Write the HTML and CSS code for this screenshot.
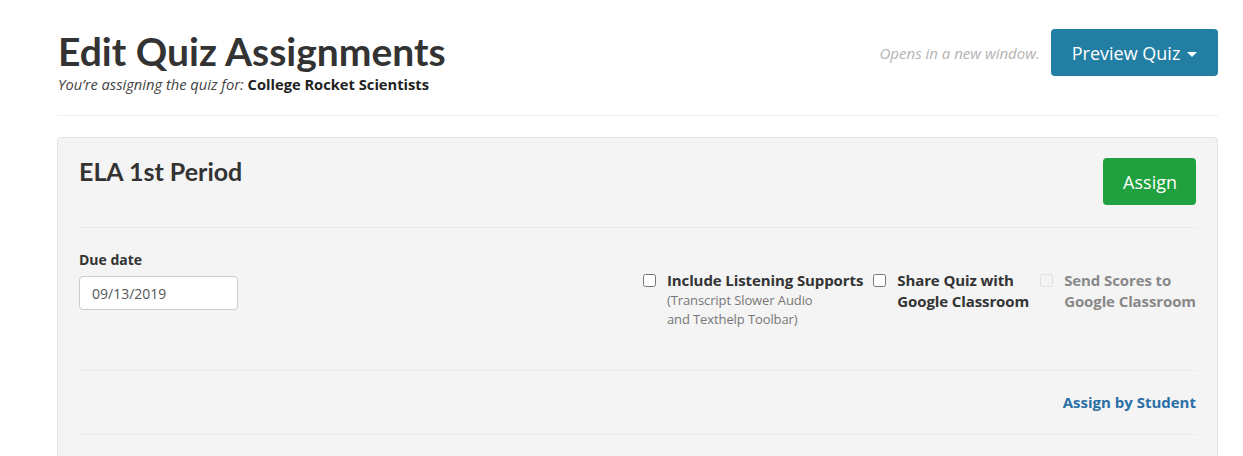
FILE: index.html
```html
<!DOCTYPE html>
<html lang="en">

<head>
    <meta charset="UTF-8">
    <meta name="viewport" content="width=device-width, initial-scale=1.0">
    <title>Edit Quiz Assignments</title>
    <link rel="stylesheet" href="styles.css">
</head>

<body>
    <div class="page">
        <div class="page-header">
            <div class="title-block">
                <h1>Edit Quiz Assignments</h1>
                <p class="subtitle"><em>You’re assigning the quiz for:</em> <strong>College Rocket Scientists</strong></p>
            </div>
            <div class="preview">
                <span class="hint">Opens in a new window.</span>
                <button class="btn btn-blue" type="button">Preview Quiz <span class="caret"></span></button>
            </div>
        </div>

        <div class="panel">
            <div class="panel-head">
                <h2>ELA 1st Period</h2>
                <button class="btn btn-green" type="button">Assign</button>
            </div>

            <div class="panel-body">
                <div class="due">
                    <label for="due-date">Due date</label>
                    <input type="text" id="due-date" value="09/13/2019">
                </div>

                <div class="options">
                    <label class="option">
                        <input type="checkbox">
                        <span>
                            <strong>Include Listening Supports</strong>
                            <small>(Transcript Slower Audio<br>and Texthelp Toolbar)</small>
                        </span>
                    </label>
                    <label class="option share">
                        <input type="checkbox">
                        <strong>Share Quiz with<br>Google Classroom</strong>
                    </label>
                    <label class="option disabled">
                        <input type="checkbox" disabled>
                        <strong>Send Scores to<br>Google Classroom</strong>
                    </label>
                </div>
            </div>

            <div class="panel-foot">
                <a href="#">Assign by Student</a>
            </div>
        </div>
    </div>
</body>

</html>
```

FILE: styles.css
```css
/* Edit Quiz page */
body {
    margin: 0;
    background-color: #fff;
    font-family: "Open Sans", "Liberation Sans", sans-serif;
    color: #333;
}

.page {
    padding: 28px 25px 0 57px;
}

.page-header {
    display: flex;
    justify-content: space-between;
    align-items: flex-start;
    padding-left: 1px;
    padding-bottom: 21px;
    border-bottom: 1px solid #eee;
}

h1 {
    margin: 0;
    font-family: Lato, "Open Sans", sans-serif;
    font-size: 39px;
    font-weight: 700;
    line-height: 46px;
    color: #333;
}

.subtitle {
    margin: 0;
    font-size: 14.7px;
    line-height: 20px;
}

.subtitle em {
    color: #444;
}

.subtitle strong {
    color: #222;
}

.preview {
    display: flex;
    align-items: center;
    gap: 11px;
    margin-top: 1px;
}

.hint {
    font-size: 15px;
    font-style: italic;
    color: #b3b3b3;
}

.btn {
    border: none;
    border-radius: 4px;
    color: #fff;
    font-family: "Open Sans", sans-serif;
    font-size: 18px;
    height: 47px;
    cursor: pointer;
}

.btn-blue {
    background-color: #237ea3;
    padding: 0 21px;
}

.btn-green {
    background-color: #20a03e;
    padding: 0 19px 0 20px;
}

.caret {
    display: inline-block;
    width: 0;
    height: 0;
    margin-left: 2px;
    vertical-align: middle;
    border-top: 5px solid #fff;
    border-left: 5px solid transparent;
    border-right: 5px solid transparent;
}

.panel {
    margin-top: 21px;
    background-color: #f4f4f4;
    border: 1px solid #e3e3e3;
    border-radius: 4px;
    padding: 0 21px 21px;
    height: 340px;
}

.panel-head {
    display: flex;
    justify-content: space-between;
    align-items: flex-start;
    padding: 20px 0 22px;
    border-bottom: 1px solid #eaeaea;
}

h2 {
    margin: 0;
    font-family: Lato, "Open Sans", sans-serif;
    font-size: 25px;
    line-height: 26px;
    font-weight: 700;
    color: #333;
}

.panel-body {
    display: flex;
    justify-content: space-between;
    align-items: flex-start;
    padding: 22px 0 41px;
    border-bottom: 1px solid #eaeaea;
}

.due label {
    display: block;
    font-size: 14px;
    font-weight: 700;
    line-height: 20px;
    margin-bottom: 6px;
}

.due input {
    width: 159px;
    height: 34px;
    box-sizing: border-box;
    padding: 0 12px;
    border: 1px solid #ccc;
    border-radius: 4px;
    font-family: "Open Sans", sans-serif;
    font-size: 14px;
    color: #555;
    background: #fff;
}

.options {
    display: flex;
    align-items: flex-start;
    margin-top: 20px;
}

.option {
    display: flex;
    align-items: flex-start;
    gap: 11px;
    font-size: 15px;
    line-height: 21px;
    letter-spacing: -0.1px;
}

.option input {
    width: 13px;
    height: 13px;
    margin: 4px 0 0;
}

.option strong {
    color: #333;
}

.option small {
    display: block;
    font-size: 13px;
    line-height: 19px;
    color: #777;
}

.share {
    margin-left: 10px;
}

.disabled {
    margin-left: 11px;
}

.disabled strong {
    color: #888;
}

.disabled input {
    opacity: 0.5;
}

.panel-foot {
    display: flex;
    justify-content: flex-end;
    padding: 21px 0;
    border-bottom: 1px solid #eaeaea;
}

.panel-foot a {
    font-size: 15px;
    font-weight: 700;
    line-height: 21px;
    color: #2a6fa6;
    text-decoration: none;
}
```
